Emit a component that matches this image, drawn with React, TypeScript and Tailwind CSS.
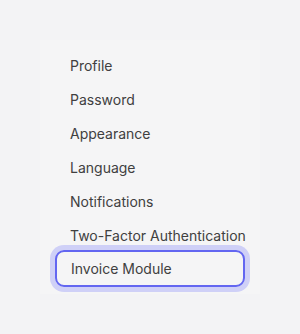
const items = [
  'Profile',
  'Password',
  'Appearance',
  'Language',
  'Notifications',
  'Two-Factor Authentication',
];

export default function App() {
  return (
    <div
      className="flex h-[334px] w-[300px] items-start bg-[#f3f3f5] pt-[40px] pl-[40px]"
      style={{ fontFamily: 'Inter, "Noto Sans", sans-serif' }}
    >
      <nav className="flex w-[220px] flex-col bg-[#f5f5f6] px-[15px] pt-[8px] pb-[7px]">
        {items.map((label) => (
          <a
            key={label}
            className="flex h-[34px] items-center px-[15px] text-[14px] whitespace-nowrap text-neutral-700"
          >
            {label}
          </a>
        ))}
        <a className="-mt-[2px] flex h-[37px] items-center rounded-[9px] border-2 border-[#6366f1] px-[14px] text-[14px] text-neutral-700 ring-[5px] ring-[#cfd0f7]">
          Invoice Module
        </a>
      </nav>
    </div>
  );
}
